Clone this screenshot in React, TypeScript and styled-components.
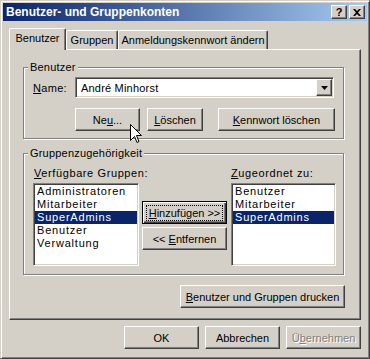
import React from "react";
import styled, { createGlobalStyle, css } from "styled-components";

const face = "#d4d0c8";
const shadow = "#808080";
const darkShadow = "#404040";
const highlight = "#0a246a";

const GlobalStyle = createGlobalStyle`
  html, body {
    margin: 0;
    padding: 0;
    background: ${face};
  }
  body {
    font-family: "Liberation Sans", Arial, sans-serif;
    font-size: 11px;
    color: #000;
  }
`;

const raised = css`
  border: 1px solid;
  border-color: #fff ${darkShadow} ${darkShadow} #fff;
  box-shadow: inset -1px -1px ${shadow};
`;

const sunken = css`
  border: 1px solid;
  border-color: ${shadow} #fff #fff ${shadow};
  box-shadow: inset 1px 1px ${darkShadow}, inset -1px -1px ${face};
`;

const Window = styled.div`
  position: relative;
  width: 370px;
  height: 359px;
  box-sizing: border-box;
  background: ${face};
  border: 1px solid;
  border-color: ${face} ${darkShadow} ${darkShadow} ${face};
  box-shadow: inset 1px 1px #fff, inset -1px -1px ${shadow};
  padding: 2px;
`;

const TitleBar = styled.div`
  display: flex;
  align-items: center;
  height: 18px;
  padding: 0 2px 0 3px;
  background: linear-gradient(to right, ${highlight}, #a6caf0);
  color: #fff;
  font-weight: bold;
  font-size: 12px;
`;

const Title = styled.span`
  flex: 1;
  white-space: nowrap;
`;

const CaptionButton = styled.div<{ $gap?: number }>`
  ${raised};
  width: 16px;
  height: 14px;
  box-sizing: border-box;
  margin-left: ${(p) => p.$gap ?? 0}px;
  background: ${face};
  color: #000;
  display: flex;
  align-items: center;
  justify-content: center;
  font-size: 11px;
  font-weight: bold;
  line-height: 1;
`;

const Body = styled.div`
  padding: 7px 6px 0 6px;
`;

const TabStrip = styled.div`
  display: flex;
  align-items: flex-end;
  height: 21px;
  position: relative;
  z-index: 1;
`;

const Tab = styled.div<{ $width: number; $active?: boolean }>`
  width: ${(p) => p.$width}px;
  height: ${(p) => (p.$active ? 22 : 19)}px;
  margin-bottom: ${(p) => (p.$active ? -1 : 0)}px;
  box-sizing: border-box;
  background: ${face};
  border-top: 1px solid #fff;
  border-left: 1px solid #fff;
  border-right: 1px solid ${darkShadow};
  border-radius: 2px 2px 0 0;
  box-shadow: inset -1px 0 ${shadow};
  display: flex;
  justify-content: center;
  padding-top: 3px;
  white-space: nowrap;
`;

const Panel = styled.div`
  ${raised};
  height: 271px;
  box-sizing: border-box;
  padding: 17px 0 0 13px;
`;

const Group = styled.div<{ $height: number; $top?: number }>`
  position: relative;
  width: 321px;
  height: ${(p) => p.$height}px;
  margin-top: ${(p) => p.$top ?? 0}px;
  box-sizing: border-box;
  border: 1px solid ${shadow};
  box-shadow: inset 1px 1px #fff, 1px 1px #fff;
`;

const GroupCaption = styled.span`
  position: absolute;
  top: -7px;
  left: 4px;
  padding: 0 2px;
  line-height: 13px;
  background: ${face};
  white-space: nowrap;
  letter-spacing: 0.2px;
`;

const UserBody = styled.div`
  padding: 9px 0 0 9px;
`;

const NameRow = styled.div`
  display: flex;
  align-items: center;
`;

const FieldLabel = styled.label`
  width: 42px;
  letter-spacing: 0.3px;
`;

const Combo = styled.div`
  ${sunken};
  width: 259px;
  height: 21px;
  box-sizing: border-box;
  padding: 1px;
  background: #fff;
  display: flex;
  align-items: center;
`;

const ComboText = styled.span`
  flex: 1;
  padding-left: 4px;
  letter-spacing: 0.2px;
`;

const DropButton = styled.div`
  ${raised};
  width: 16px;
  height: 17px;
  box-sizing: border-box;
  background: ${face};
  display: flex;
  align-items: center;
  justify-content: center;
`;

const ButtonRow = styled.div`
  display: flex;
  margin: 10px 0 0 42px;
`;

const Button = styled.button<{
  $width: number;
  $left?: number;
  $top?: number;
  $default?: boolean;
  $disabled?: boolean;
}>`
  ${raised};
  width: ${(p) => p.$width}px;
  height: 23px;
  margin: ${(p) => p.$top ?? 0}px 0 0 ${(p) => p.$left ?? 0}px;
  padding: 0;
  box-sizing: border-box;
  background: ${face};
  font: inherit;
  color: ${(p) => (p.$disabled ? shadow : "#000")};
  text-shadow: ${(p) => (p.$disabled ? "1px 1px #fff" : "none")};
  white-space: nowrap;
  ${(p) =>
    p.$default &&
    css`
      border-color: #000;
      box-shadow: inset 1px 1px #fff, inset -1px -1px ${darkShadow},
        inset -2px -2px ${shadow};
    `}
`;

const FocusRing = styled.span`
  display: inline-block;
  padding: 1px 2px;
  outline: 1px dotted #000;
  outline-offset: 0;
`;

const Key = styled.span`
  text-decoration: underline;
`;

const MemberGrid = styled.div`
  display: grid;
  grid-template-columns: 106px 85px 106px;
  grid-template-rows: 13px 83px;
  column-gap: 3px;
  row-gap: 3px;
  padding: 13px 0 0 9px;
`;

const ListLabel = styled.div<{ $col: number }>`
  grid-column: ${(p) => p.$col};
  grid-row: 1;
  line-height: 13px;
  padding-left: 1px;
  white-space: nowrap;
  letter-spacing: 0.6px;
`;

const ListBox = styled.div<{ $col: number }>`
  ${sunken};
  grid-column: ${(p) => p.$col};
  grid-row: 2;
  box-sizing: border-box;
  background: #fff;
  padding: 1px;
  margin-left: ${(p) => (p.$col === 3 ? 1 : 0)}px;
`;

const ListItem = styled.div<{ $selected?: boolean }>`
  height: 13px;
  line-height: 13px;
  padding-left: 2px;
  letter-spacing: 0.8px;
  background: ${(p) => (p.$selected ? highlight : "transparent")};
  color: ${(p) => (p.$selected ? "#fff" : "#000")};
  white-space: nowrap;
`;

const MoveColumn = styled.div`
  grid-column: 2;
  grid-row: 2;
  display: flex;
  flex-direction: column;
  gap: 3px;
  padding-top: 18px;
`;

const DialogButtons = styled.div`
  display: flex;
  justify-content: flex-end;
  gap: 6px;
  margin-top: 6px;
`;

const Pointer = styled.svg`
  position: absolute;
  left: 129px;
  top: 123px;
`;

const available = ["Administratoren", "Mitarbeiter", "SuperAdmins", "Benutzer", "Verwaltung"];
const assigned = ["Benutzer", "Mitarbeiter", "SuperAdmins"];

export default function App() {
  return (
    <>
      <GlobalStyle />
      <Window>
        <TitleBar>
          <Title>Benutzer- und Gruppenkonten</Title>
          <CaptionButton>?</CaptionButton>
          <CaptionButton $gap={2}>
            <svg width="8" height="7" viewBox="0 0 8 7">
              <path d="M0 0h2l2 2 2-2h2L5 3.5 8 7H6L4 5 2 7H0l3-3.5z" fill="#000" />
            </svg>
          </CaptionButton>
        </TitleBar>

        <Body>
          <TabStrip>
            <Tab $width={57} $active>
              Benutzer
            </Tab>
            <Tab $width={52}>Gruppen</Tab>
            <Tab $width={150}>Anmeldungskennwort ändern</Tab>
          </TabStrip>

          <Panel>
            <Group $height={72}>
              <GroupCaption>Benutzer</GroupCaption>
              <UserBody>
                <NameRow>
                  <FieldLabel>
                    <Key>N</Key>ame:
                  </FieldLabel>
                  <Combo>
                    <ComboText>André Minhorst</ComboText>
                    <DropButton>
                      <svg width="7" height="4" viewBox="0 0 7 4">
                        <path d="M0 0h7L3.5 4z" fill="#000" />
                      </svg>
                    </DropButton>
                  </Combo>
                </NameRow>
                <ButtonRow>
                  <Button $width={65}>
                    Ne<Key>u</Key>...
                  </Button>
                  <Button $width={56} $left={7}>
                    <Key>L</Key>öschen
                  </Button>
                  <Button $width={117} $left={15}>
                    <Key>K</Key>ennwort löschen
                  </Button>
                </ButtonRow>
              </UserBody>
            </Group>

            <Group $height={122} $top={14}>
              <GroupCaption>Gruppenzugehörigkeit</GroupCaption>
              <MemberGrid>
                <ListLabel $col={1}>
                  <Key>V</Key>erfügbare Gruppen:
                </ListLabel>
                <ListLabel $col={3}>
                  <Key>Z</Key>ugeordnet zu:
                </ListLabel>
                <ListBox $col={1}>
                  {available.map((g) => (
                    <ListItem key={g} $selected={g === "SuperAdmins"}>
                      {g}
                    </ListItem>
                  ))}
                </ListBox>
                <MoveColumn>
                  <Button $width={85} $default>
                    <FocusRing>
                      <Key>H</Key>inzufügen &gt;&gt;
                    </FocusRing>
                  </Button>
                  <Button $width={85}>
                    &lt;&lt; <Key>E</Key>ntfernen
                  </Button>
                </MoveColumn>
                <ListBox $col={3}>
                  {assigned.map((g) => (
                    <ListItem key={g} $selected={g === "SuperAdmins"}>
                      {g}
                    </ListItem>
                  ))}
                </ListBox>
              </MemberGrid>
            </Group>

            <Button $width={165} $left={157} $top={10}>
              <Key>B</Key>enutzer und Gruppen drucken
            </Button>
          </Panel>

          <DialogButtons>
            <Button $width={75}>OK</Button>
            <Button $width={75}>Abbrechen</Button>
            <Button $width={75} $disabled>
              Ü<Key>b</Key>ernehmen
            </Button>
          </DialogButtons>
        </Body>

        <Pointer width="12" height="20" viewBox="0 0 12 20">
          <path
            d="M0.5 0.5V16.5L4.5 12.5L7 18.5L9 17.5L6.5 11.5H11.5Z"
            fill="#fff"
            stroke="#000"
            strokeWidth="1"
          />
        </Pointer>
      </Window>
    </>
  );
}
